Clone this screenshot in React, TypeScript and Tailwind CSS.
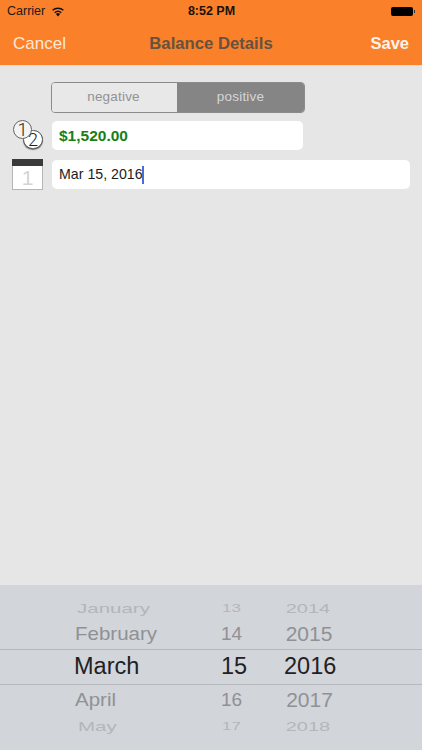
const near = "text-[#8f9195] scale-y-[0.92]";
const far = "text-[#b4b6ba] scale-y-[0.66]";

const rows = [
  { m: "January", d: "13", y: "2014", h: "h-[26px]", mc: `${far} text-[20.5px] ml-[3px]`, dc: `${far} text-[17px] ml-[1px]`, yc: `${far} text-[20px] -ml-[2px]` },
  { m: "February", d: "14", y: "2015", h: "h-[28px] pb-[2px]", mc: `${near} text-[20.5px] ml-[1px]`, dc: `${near} text-[19px]`, yc: near + " text-[21px]" },
  { m: "March", d: "15", y: "2016", h: "h-[36px] border-y border-[#b5b8bd]", mc: "text-[23.5px] text-[#1f2124]", dc: "text-[23.5px] text-[#1f2124]", yc: "text-[23.5px] text-[#1f2124] ml-[1px]" },
  { m: "April", d: "16", y: "2017", h: "h-[30px]", mc: `${near} text-[20.5px] ml-[1px]`, dc: `${near} text-[19px]`, yc: near + " text-[21px] ml-[1px]" },
  { m: "May", d: "17", y: "2018", h: "h-[22px]", mc: `${far} text-[20.5px] ml-[4px]`, dc: `${far} text-[17px] ml-[1px]`, yc: `${far} text-[20px] -ml-[2px]` },
];

function Wifi() {
  return (
    <svg width="14" height="11" viewBox="0 0 14 11" className="ml-[6px]">
      <path d="M7 10.5 L4.9 8 A3.2 3.2 0 0 1 9.1 8 Z" fill="#111" />
      <path d="M3.7 6.7 A5 5 0 0 1 10.3 6.7" stroke="#111" strokeWidth="1.5" fill="none" />
      <path d="M1.6 4.3 A8 8 0 0 1 12.4 4.3" stroke="#111" strokeWidth="1.5" fill="none" />
    </svg>
  );
}

function Coins() {
  return (
    <div className="relative w-[32px] h-[30px] shrink-0 font-['Roboto',sans-serif] font-light">
      <div className="absolute left-[11px] top-[10px] w-[20px] h-[19px] rounded-full border border-[#555] bg-white shadow-[0_1px_1px_#777] flex items-center justify-center text-[18px] text-[#222]">
        2
      </div>
      <div className="absolute left-[1px] top-0 w-[19px] h-[19px] rounded-full border border-[#666] bg-[#f4f4f4] flex items-center justify-center text-[18px] text-[#222]">
        1
      </div>
    </div>
  );
}

function CalendarIcon() {
  return (
    <div className="w-[31px] h-[31px] shrink-0 border border-[#b5b5b5] bg-white flex flex-col">
      <div className="h-[7px] -mx-px -mt-px bg-[#3a3a3a] shrink-0" />
      <div className="flex-1 flex items-center justify-center text-[21px] leading-none text-[#d4d4d4]">1</div>
    </div>
  );
}

export default function App() {
  return (
    <div className="w-[422px] h-[750px] bg-[#e6e6e6] flex flex-col overflow-hidden font-['Liberation_Sans',Arial,sans-serif]">
      <header className="h-[66px] bg-[#fb802a] shrink-0 border-b border-[#dcdcdc]">
        <div className="h-[22px] pt-[1px] px-[7px] grid grid-cols-3 items-center text-[12.5px] text-[#1a1a1a]">
          <div className="flex items-center">
            Carrier
            <Wifi />
          </div>
          <div className="text-center font-bold text-[#1a1207] whitespace-nowrap pl-[1px]">8:52 PM</div>
          <div className="flex justify-end items-center">
            <div className="w-[22px] h-[9px] rounded-[2px] bg-black" />
            <div className="w-[1px] h-[3px] bg-[#333] ml-[1px]" />
          </div>
        </div>
        <div className="h-[43px] px-[13px] grid grid-cols-[1fr_auto_1fr] items-center text-[17px]">
          <span className="text-[#fde9d8]">Cancel</span>
          <span className="font-bold text-[#66523f] text-[16.7px]">Balance Details</span>
          <span className="font-bold text-[#fdf3ea] text-[16.5px] text-right">Save</span>
        </div>
      </header>

      <main className="flex-1 pt-[16px] pl-[12px] pr-[12px] flex flex-col">
        <div className="ml-[39px] w-[254px] h-[31px] flex rounded-[4px] border border-[#8b8b8b] overflow-hidden text-[13.5px] tracking-[0.2px]">
          <div className="w-[125px] flex items-center justify-center bg-[#e8e8e8] text-[#929292] pr-[2px]">negative</div>
          <div className="flex-1 flex items-center justify-center bg-[#858585] text-[#d6d6d6]">positive</div>
        </div>

        <div className="mt-[7px] flex items-start">
          <div className="w-[40px]">
            <Coins />
          </div>
          <div className="w-[251px] h-[29px] mt-[1px] rounded-[5px] bg-white flex items-center pl-[7px] text-[15.5px] font-bold text-[#168016]">
            $1,520.00
          </div>
        </div>

        <div className="mt-[9px] flex items-start">
          <div className="w-[40px]">
            <CalendarIcon />
          </div>
          <div className="w-[358px] h-[29px] mt-[1px] rounded-[5px] bg-white flex items-center pl-[7px] text-[14.2px] text-[#1c1c1c]">
            Mar 15, 2016
            <span className="w-[2px] h-[18px] -ml-[1px] bg-[#4a6bd8]" />
          </div>
        </div>
      </main>

      <section className="h-[165px] shrink-0 bg-[#d2d5da] pt-[10px]">
        {rows.map((row) => (
          <div key={row.m} className={`${row.h} grid grid-cols-[147px_62px_52px] items-center pl-[74px] leading-none`}>
            <span className={`${row.mc} leading-none origin-left whitespace-nowrap`}>{row.m}</span>
            <span className={`${row.dc} leading-none origin-left`}>{row.d}</span>
            <span className={`${row.yc} leading-none text-center whitespace-nowrap`}>{row.y}</span>
          </div>
        ))}
      </section>
    </div>
  );
}
